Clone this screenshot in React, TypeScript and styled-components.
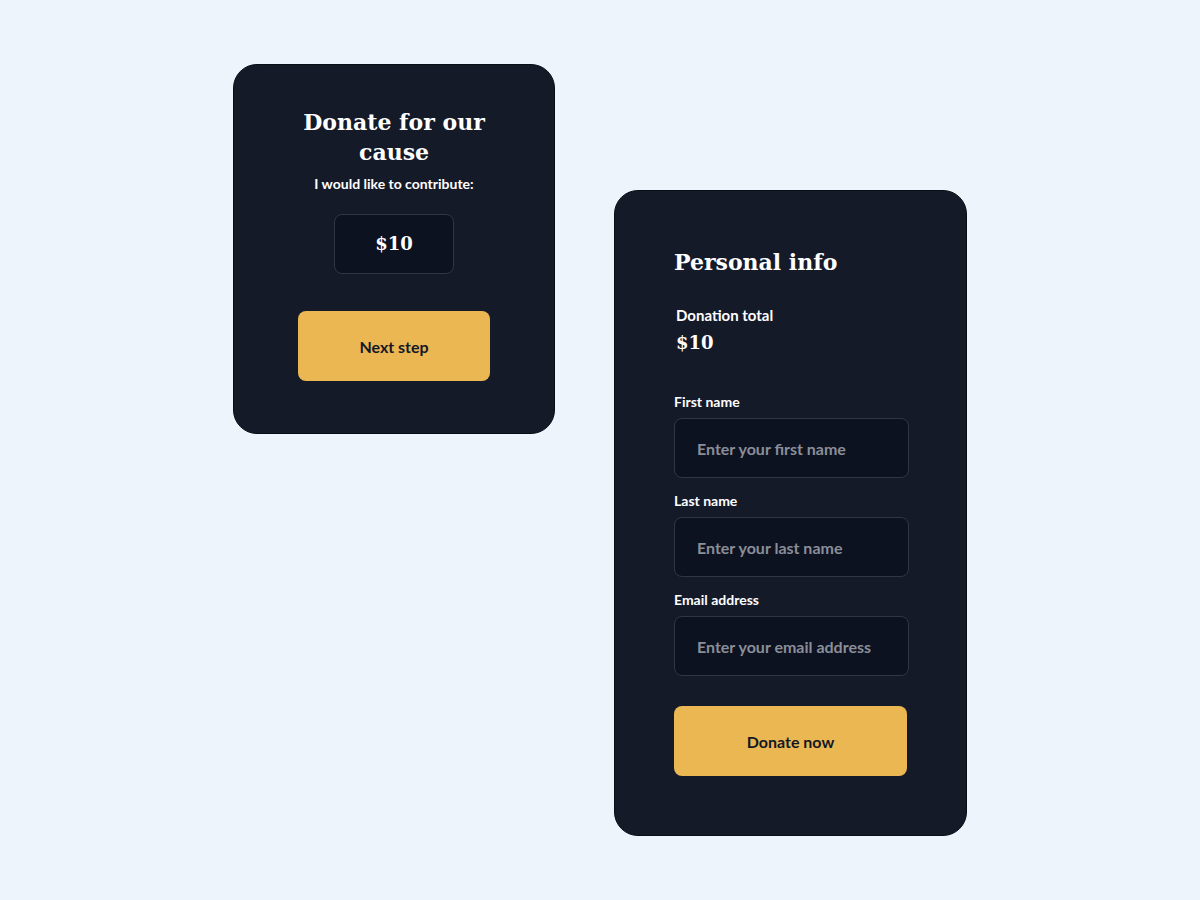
import styled, { createGlobalStyle } from 'styled-components'

const GlobalStyle = createGlobalStyle`
  * {
    box-sizing: border-box;
  }
  body {
    margin: 0;
    background: #eef4fc;
    font-family: 'Lato', 'Noto Sans', sans-serif;
  }
`

const Page = styled.div`
  width: 1200px;
  height: 900px;
  display: flex;
  justify-content: center;
  align-items: flex-start;
  gap: 59px;
  padding-top: 64px;
`

const Card = styled.div<{ $width: number; $offset?: number }>`
  width: ${p => p.$width}px;
  margin-top: ${p => p.$offset || 0}px;
  background: #151a29;
  border: 1px solid #0a0d15;
  border-radius: 24px;
  color: #fff;
  display: flex;
  flex-direction: column;
`

const AmountCard = styled(Card)`
  align-items: center;
  padding: 42px 0 52px;
`

const InfoCard = styled(Card)`
  padding: 56px 58px 59px 59px;
`

const Heading = styled.h1<{ $center?: boolean }>`
  margin: 0;
  font-family: 'DejaVu Serif', 'Liberation Serif', serif;
  font-weight: 700;
  font-size: 22px;
  line-height: 30px;
  text-align: ${p => (p.$center ? 'center' : 'left')};
  max-width: ${p => (p.$center ? '200px' : 'none')};
`

const Subtitle = styled.p`
  margin: 9px 0 0;
  font-size: 14px;
  line-height: 16px;
  font-weight: 700;
`

const AmountBox = styled.div`
  margin-top: 22px;
  width: 120px;
  height: 60px;
  border-radius: 8px;
  background: #0d1221;
  border: 1px solid #2f3648;
  display: flex;
  align-items: center;
  justify-content: center;
`

const Money = styled.span`
  font-family: 'DejaVu Serif', 'Liberation Serif', serif;
  font-weight: 700;
  font-size: 18px;
  line-height: 28px;
`

const Button = styled.button<{ $width: number; $top: number }>`
  margin-top: ${p => p.$top}px;
  width: ${p => p.$width}px;
  height: 70px;
  border: none;
  border-radius: 8px;
  background: #ebb752;
  color: #141826;
  font-family: 'Lato', 'Noto Sans', sans-serif;
  font-size: 16px;
  font-weight: 700;
  cursor: pointer;
`

const Total = styled.div`
  margin-top: 28px;
  padding-left: 2px;
  display: flex;
  flex-direction: column;
  gap: 4px;
`

const TotalLabel = styled.span`
  font-size: 15px;
  line-height: 20px;
  font-weight: 700;
`

const Fields = styled.div`
  margin-top: 37px;
  display: flex;
  flex-direction: column;
  gap: 15px;
`

const Field = styled.label`
  display: flex;
  flex-direction: column;
  gap: 8px;
`

const FieldLabel = styled.span`
  font-size: 14px;
  line-height: 16px;
  font-weight: 700;
`

const Input = styled.input`
  width: 235px;
  height: 60px;
  border-radius: 8px;
  background: #0d1221;
  border: 1px solid #2f3648;
  padding: 0 22px;
  color: #fff;
  font-family: 'Lato', 'Noto Sans', sans-serif;
  font-size: 16px;
  font-weight: 700;
  outline: none;
  &::placeholder {
    color: #8a8e98;
  }
`

const fields = [
  { label: 'First name', placeholder: 'Enter your first name' },
  { label: 'Last name', placeholder: 'Enter your last name' },
  { label: 'Email address', placeholder: 'Enter your email address' }
]

export default function App() {
  return (
    <>
      <GlobalStyle />
      <Page>
        <AmountCard $width={322}>
          <Heading $center>Donate for our cause</Heading>
          <Subtitle>I would like to contribute:</Subtitle>
          <AmountBox>
            <Money>$10</Money>
          </AmountBox>
          <Button $width={192} $top={37}>Next step</Button>
        </AmountCard>
        <InfoCard $width={353} $offset={126}>
          <Heading>Personal info</Heading>
          <Total>
            <TotalLabel>Donation total</TotalLabel>
            <Money>$10</Money>
          </Total>
          <Fields>
            {fields.map(f => (
              <Field key={f.label}>
                <FieldLabel>{f.label}</FieldLabel>
                <Input placeholder={f.placeholder} />
              </Field>
            ))}
          </Fields>
          <Button $width={233} $top={30}>Donate now</Button>
        </InfoCard>
      </Page>
    </>
  )
}
